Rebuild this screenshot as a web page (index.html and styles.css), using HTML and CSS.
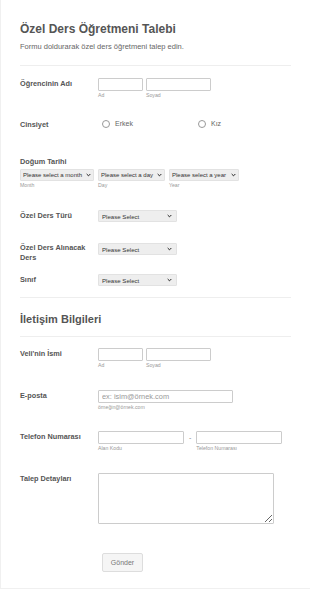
FILE: index.html
```html
<!DOCTYPE html>
<html lang="tr">
  <head>
    <meta charset="utf-8">
    <link rel="stylesheet" href="styles.css">
  </head>
  <body>
    <form class="card">
      <div class="header">
        <h1>Özel Ders Öğretmeni Talebi</h1>
        <p>Formu doldurarak özel ders öğretmeni talep edin.</p>
      </div>

      <div class="row row-name">
        <label class="lbl">Öğrencinin Adı</label>
        <div class="ctrl pair">
          <span class="sub"><input type="text" class="w-first"><small>Ad</small></span>
          <span class="sub"><input type="text" class="w-last"><small>Soyad</small></span>
        </div>
      </div>

      <div class="row row-radio">
        <label class="lbl">Cinsiyet</label>
        <div class="ctrl radios">
          <span class="radio"><i></i>Erkek</span>
          <span class="radio"><i></i>Kız</span>
        </div>
      </div>

      <div class="row row-date">
        <label class="lbl">Doğum Tarihi</label>
        <div class="dates">
          <span class="sub"><select class="w-month"><option>Please select a month</option></select><small>Month</small></span>
          <span class="sub"><select class="w-day"><option>Please select a day</option></select><small>Day</small></span>
          <span class="sub"><select class="w-year"><option>Please select a year</option></select><small>Year</small></span>
        </div>
      </div>

      <div class="row row-type">
        <label class="lbl">Özel Ders Türü</label>
        <div class="ctrl"><select class="w-sel"><option>Please Select</option></select></div>
      </div>

      <div class="row row-lesson">
        <label class="lbl">Özel Ders Alınacak Ders</label>
        <div class="ctrl"><select class="w-sel"><option>Please Select</option></select></div>
      </div>

      <div class="row row-class">
        <label class="lbl">Sınıf</label>
        <div class="ctrl"><select class="w-sel"><option>Please Select</option></select></div>
      </div>

      <div class="section">
        <h2>İletişim Bilgileri</h2>
      </div>

      <div class="row row-parent">
        <label class="lbl">Veli'nin İsmi</label>
        <div class="ctrl pair">
          <span class="sub"><input type="text" class="w-first"><small>Ad</small></span>
          <span class="sub"><input type="text" class="w-last"><small>Soyad</small></span>
        </div>
      </div>

      <div class="row row-mail">
        <label class="lbl">E-posta</label>
        <div class="ctrl">
          <span class="sub"><input type="text" class="w-mail" placeholder="ex: isim@örnek.com"><small>örneğin@örnek.com</small></span>
        </div>
      </div>

      <div class="row row-phone">
        <label class="lbl">Telefon Numarası</label>
        <div class="ctrl pair">
          <span class="sub"><input type="text" class="w-phone"><small>Alan Kodu</small></span>
          <span class="dash">-</span>
          <span class="sub"><input type="text" class="w-phone"><small>Telefon Numarası</small></span>
        </div>
      </div>

      <div class="row row-text">
        <label class="lbl">Talep Detayları</label>
        <div class="ctrl"><textarea></textarea></div>
      </div>

      <div class="actions">
        <button type="button">Gönder</button>
      </div>
    </form>
  </body>
</html>
```

FILE: styles.css
```css
html, body { margin:0; padding:0; background:white; }
body { font-family:"Liberation Sans", Arial, sans-serif; color:#555; }

.card { border-left:1px solid #f0f0f0; border-bottom:1px solid #f0f0f0; height:589px; padding:0 19px; box-sizing:border-box; }

.header { padding-top:22px; border-bottom:1px solid #eee; height:43px; box-sizing:content-box; }
.header h1 { margin:0; font-size:12px; font-weight:bold; color:#555; line-height:15px; }
.header p { margin:5px 0 0; font-size:7.5px; color:#666; line-height:10px; }

.row { display:flex; align-items:flex-start; }
.lbl { width:78px; flex:none; font-size:7.3px; font-weight:bold; color:#555; line-height:10px; padding-right:6px; box-sizing:border-box; }
.ctrl { flex:1; display:flex; align-items:flex-start; }
.pair { gap:3px; }

.sub { display:flex; flex-direction:column; }
.sub small { font-size:5.2px; color:#999; line-height:6px; margin-top:1px; }

input, textarea { font:inherit; border:1px solid #ccc; border-radius:1px; background:white; box-sizing:border-box; margin:0; padding:0 3px; outline:none; }
input { height:13px; font-size:7.4px; }
input::placeholder { color:#999; }

select {
  -webkit-appearance:none; appearance:none; font-family:inherit; font-size:6.1px; color:#333;
  background:#eee url("data:image/svg+xml;utf8,<svg xmlns='http://www.w3.org/2000/svg' width='6' height='4' viewBox='0 0 6 4'><path d='M0.8 0.8 L3 3 L5.2 0.8' fill='none' stroke='%23222' stroke-width='1.2'/></svg>") no-repeat right 4px center;
  background-size:5px 4px; border:1px solid #e2e2e2; border-radius:1px; height:12px; padding:0 10px 0 3px; margin:0; box-sizing:border-box;
}
.dates select { font-size:6px; background-position:right 2px center; padding:0 7px 0 2px; }

.w-first { width:45px; }
.w-last { width:65px; }
.w-mail { width:135px; }
.w-phone { width:86px; }
.w-sel { width:79px; }
.w-month { width:74px; }
.w-day { width:67px; }
.w-year { width:70px; }

.row-name { margin-top:12px; }
.row-name .lbl { padding-top:1px; }

.row-radio { margin-top:20px; }
.row-radio .lbl { padding-top:2px; }
.radios { padding-left:4px; }
.radio { width:96px; display:flex; align-items:center; font-size:7px; color:#666; line-height:9px; }
.radio i { width:6px; height:6px; border:1px solid #999; border-radius:50%; margin-right:5px; margin-top:2px; }

.row-date { margin-top:27px; flex-direction:column; }
.dates { display:flex; gap:4px; margin-top:2px; }

.row-type { margin-top:22px; }
.row-type .lbl { padding-top:1px; }
.row-lesson { margin-top:21px; }
.row-lesson .lbl { padding-top:0; }
.row-class { margin-top:11px; }
.row-class .lbl { padding-top:1px; }

.section { margin-top:11px; border-top:1px solid #eee; border-bottom:1px solid #eee; height:38px; }
.section h2 { margin:14px 0 0; font-size:11px; font-weight:bold; color:#555; line-height:14px; }

.row-parent { margin-top:11px; }
.row-parent .lbl { padding-top:1px; }
.row-mail { margin-top:22px; }
.row-mail .lbl { padding-top:1px; }
.row-phone { margin-top:21px; }
.row-phone .lbl { padding-top:1px; }
.dash { font-size:7px; color:#888; padding:0 2px; line-height:13px; }
.row-text { margin-top:22px; }
.row-text .lbl { padding-top:1px; }
textarea { width:176px; height:51px; resize:vertical; display:block; }

.actions { margin-top:27px; padding-left:82px; }
button { font-family:inherit; font-size:7px; color:#777; background:#f5f5f5; border:1px solid #ddd; border-radius:2px; width:41px; height:19px; padding:0; }
```
